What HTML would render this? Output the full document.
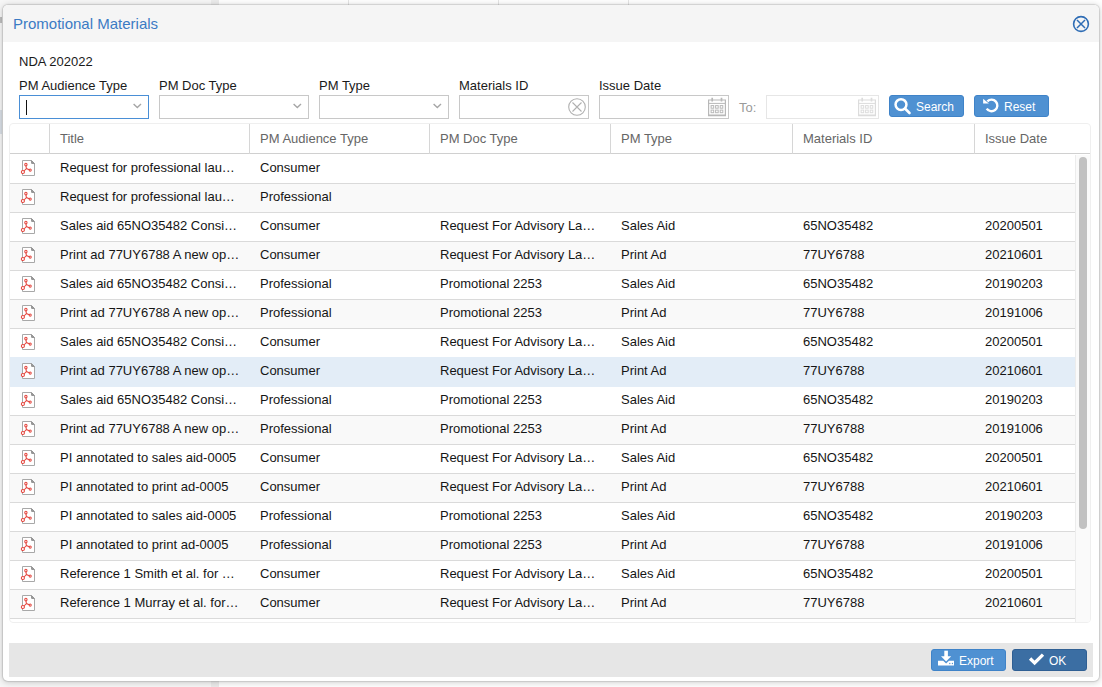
<!DOCTYPE html>
<html><head><meta charset="utf-8">
<style>
*{box-sizing:border-box;margin:0;padding:0}
html,body{width:1102px;height:687px;overflow:hidden;background:#fbfbfb;font-family:"Liberation Sans",sans-serif;font-size:13px;color:#222}
.abs{position:absolute}
#dlg{position:absolute;left:3px;top:5px;width:1096px;height:676px;background:#fff;border-radius:5px;box-shadow:0 0 1px 1px rgba(0,0,0,.12),0 1px 6px 1px rgba(0,0,0,.16);overflow:hidden}
#hdr{position:absolute;left:0;top:0;width:1096px;height:37px;background:#f5f5f5}
#ttl{position:absolute;left:10px;top:10px;font-size:15px;line-height:17px;color:#3b7bc4;white-space:nowrap}
.lbl{position:absolute;font-size:13px;line-height:15px;color:#1a1a1a;white-space:nowrap}
.inp{position:absolute;top:90px;height:24px;border:1px solid #c8c8c8;background:#fff}
.inp.focus{border-color:#4a8fd6}
.chev{position:absolute;right:6px;top:7px}
.btn{position:absolute;height:22px;border-radius:3px;background:#4f91d2;border:1px solid #3f83c8;color:#fff;font-size:12px;line-height:20px;white-space:nowrap}
#tbl{position:absolute;left:6px;top:118px;width:1082px;height:500px;border:1px solid #efefef;border-radius:4px;overflow:hidden;background:#fff}
.th{position:absolute;top:0;height:30px;border-bottom:1px solid #d0d0d0}
.thc{position:absolute;top:0;height:30px;border-left:1px solid #d6d6d6;color:#666;line-height:30px;padding-left:10px;white-space:nowrap}
.row{position:absolute;left:0;width:1065px;height:30px;border-bottom:1px solid #dadada;background:#fff}
.row.alt{background:#f9f9f9}
.row.hl{background:#e3edf7;border-bottom-color:#e3edf7}
.row .c{position:absolute;top:0;line-height:27px;white-space:nowrap;color:#151515}
.pdf{position:absolute;left:10px;top:6px}
#sb{position:absolute;left:1065px;top:31px;width:15px;height:470px;background:#fafafa;border-left:1px solid #ececec}
#thumb{position:absolute;left:3px;top:2px;width:8px;height:372px;border-radius:4px;background:#c1c1c1}
#ftr{position:absolute;left:6px;top:638px;width:1084px;height:34px;background:#e6e6e6}
</style></head><body>
<div class="abs" style="left:0;top:0;width:211px;height:687px;background:#f6f6f6"></div>
<div class="abs" style="left:211px;top:0;width:8px;height:687px;background:#ebebeb"></div>
<div class="abs" style="left:219px;top:0;width:883px;height:687px;background:#fefefe"></div>
<div class="abs" style="left:348px;top:0;width:1px;height:6px;background:#e4e4e4"></div>
<div class="abs" style="left:498px;top:0;width:1px;height:6px;background:#e4e4e4"></div>
<div class="abs" style="left:628px;top:0;width:1px;height:6px;background:#e4e4e4"></div>
<div class="abs" style="left:0;top:17px;width:2px;height:6px;background:#bdbdbd"></div>
<div class="abs" style="left:0;top:110px;width:2px;height:24px;background:#d8dee5"></div>
<div id="dlg">
  <div id="hdr">
    <div id="ttl">Promotional Materials</div>
    <svg class="abs" style="left:1069px;top:10px" width="18" height="18" viewBox="0 0 18 18"><circle cx="9" cy="9" r="7.4" fill="none" stroke="#2f6db5" stroke-width="1.6"/><path d="M5 5L13 13M13 5L5 13" stroke="#2f6db5" stroke-width="1.5"/></svg>
  </div>
  <div class="lbl" style="left:16px;top:49px">NDA 202022</div>
  <div class="lbl" style="left:16px;top:73px">PM Audience Type</div>
  <div class="lbl" style="left:156px;top:73px">PM Doc Type</div>
  <div class="lbl" style="left:316px;top:73px">PM Type</div>
  <div class="lbl" style="left:456px;top:73px">Materials ID</div>
  <div class="lbl" style="left:596px;top:73px">Issue Date</div>

  <div class="inp focus" style="left:16px;width:130px"><div class="abs" style="left:6px;top:4px;width:1px;height:15px;background:#111"></div>
    <svg class="chev" width="9" height="6" viewBox="0 0 9 6"><path d="M0.6 0.9L4.3 4.6L8 0.9" fill="none" stroke="#a6a6a6" stroke-width="1.35"/></svg></div>
  <div class="inp" style="left:156px;width:150px"><svg class="chev" width="9" height="6" viewBox="0 0 9 6"><path d="M0.6 0.9L4.3 4.6L8 0.9" fill="none" stroke="#a6a6a6" stroke-width="1.35"/></svg></div>
  <div class="inp" style="left:316px;width:130px"><svg class="chev" width="9" height="6" viewBox="0 0 9 6"><path d="M0.6 0.9L4.3 4.6L8 0.9" fill="none" stroke="#a6a6a6" stroke-width="1.35"/></svg></div>
  <div class="inp" style="left:456px;width:130px"><svg class="abs" style="left:108px;top:2px" width="18" height="18" viewBox="0 0 18 18"><circle cx="9" cy="9" r="8.3" fill="none" stroke="#b0b0b0" stroke-width="1.1"/><path d="M4.5 4.5L13.5 13.5M13.5 4.5L4.5 13.5" stroke="#b0b0b0" stroke-width="1.1"/></svg></div>
  <div class="inp" style="left:596px;width:130px"><svg class="abs" style="left:108px;top:1px" width="18" height="20" viewBox="0 0 18 20"><g fill="none" stroke="#b8b8b8"><path d="M0.6 3H17.4V18.6H0.6Z" stroke-width="1.2"/><path d="M0.6 6.4H17.4"/><path d="M0.6 18.2H17.4" stroke-width="1.6"/><path d="M4.2 0.8V4.4M13.5 0.8V4.4" stroke-width="1.7"/><rect x="3.1" y="8.6" width="2.6" height="2.6"/><rect x="7.6" y="8.6" width="2.6" height="2.6"/><rect x="12.2" y="8.6" width="2.6" height="2.6"/><rect x="3.1" y="13.1" width="2.6" height="2.6"/><rect x="7.6" y="13.1" width="2.6" height="2.6"/><rect x="12.2" y="13.1" width="2.6" height="2.6"/></g></svg></div>
  <div class="lbl" style="left:736px;top:95px;color:#9a9a9a">To:</div>
  <div class="inp" style="left:763px;width:113px;border-color:#e6e6e6"><svg class="abs" style="left:91px;top:1px" width="18" height="20" viewBox="0 0 18 20"><g fill="none" stroke="#dcdcdc"><path d="M0.6 3H17.4V18.6H0.6Z" stroke-width="1.2"/><path d="M0.6 6.4H17.4"/><path d="M0.6 18.2H17.4" stroke-width="1.6"/><path d="M4.2 0.8V4.4M13.5 0.8V4.4" stroke-width="1.7"/><rect x="3.1" y="8.6" width="2.6" height="2.6"/><rect x="7.6" y="8.6" width="2.6" height="2.6"/><rect x="12.2" y="8.6" width="2.6" height="2.6"/><rect x="3.1" y="13.1" width="2.6" height="2.6"/><rect x="7.6" y="13.1" width="2.6" height="2.6"/><rect x="12.2" y="13.1" width="2.6" height="2.6"/></g></svg></div>

  <div class="btn" style="left:886px;top:90px;width:75px">
    <svg class="abs" style="left:0;top:0" width="24" height="20" viewBox="0 0 24 20"><circle cx="11" cy="8.6" r="5.45" fill="none" stroke="#fff" stroke-width="2.5"/><path d="M15.2 12.8L19.5 17" stroke="#fff" stroke-width="2.6" stroke-linecap="round"/></svg>
    <span class="abs" style="left:26px;top:1px">Search</span></div>
  <div class="btn" style="left:971px;top:90px;width:75px">
    <svg class="abs" style="left:0;top:0" width="26" height="20" viewBox="0 0 26 20"><path d="M12.4 5.4A5.8 5.8 0 1 1 11.7 12.6" fill="none" stroke="#fff" stroke-width="2.4"/><path d="M8.1 2.8V7.6H13.9Z" fill="#fff"/></svg>
    <span class="abs" style="left:29px;top:1px">Reset</span></div>

  <div id="tbl">
    <div class="th" style="left:0;width:1082px"></div>
    <div class="thc" style="left:39px;width:200px">Title</div>
    <div class="thc" style="left:239px;width:180px">PM Audience Type</div>
    <div class="thc" style="left:419px;width:181px">PM Doc Type</div>
    <div class="thc" style="left:600px;width:182px">PM Type</div>
    <div class="thc" style="left:782px;width:182px">Materials ID</div>
    <div class="thc" style="left:964px;width:118px">Issue Date</div>
<div class="row" style="top:30px;z-index:100"><svg class="pdf" width="17" height="18" viewBox="0 0 17 18"><path d="M2.5 0.5H11.4L14.5 3.6V15.5H2.5Z" fill="#fff" stroke="#a8a8a8" stroke-width="1"/><path d="M11.4 0.6L14.4 3.6L11.6 3.4Z" fill="#9a9a9a" stroke="#8e8e8e" stroke-width="0.9"/><g fill="none" stroke="#e4453d" stroke-width="1.05"><ellipse cx="5.9" cy="4.6" rx="1.15" ry="1.35"/><path d="M6 6L6.4 8.6L9.3 9.8M6.4 8.6L4 11"/><circle cx="10.2" cy="10.1" r="1.05"/><circle cx="2.9" cy="12" r="1.55" fill="#fff"/></g></svg><span class="c" style="left:50px">Request for professional lau…</span><span class="c" style="left:250px">Consumer</span></div>
<div class="row alt" style="top:59px;z-index:99"><svg class="pdf" width="17" height="18" viewBox="0 0 17 18"><path d="M2.5 0.5H11.4L14.5 3.6V15.5H2.5Z" fill="#fff" stroke="#a8a8a8" stroke-width="1"/><path d="M11.4 0.6L14.4 3.6L11.6 3.4Z" fill="#9a9a9a" stroke="#8e8e8e" stroke-width="0.9"/><g fill="none" stroke="#e4453d" stroke-width="1.05"><ellipse cx="5.9" cy="4.6" rx="1.15" ry="1.35"/><path d="M6 6L6.4 8.6L9.3 9.8M6.4 8.6L4 11"/><circle cx="10.2" cy="10.1" r="1.05"/><circle cx="2.9" cy="12" r="1.55" fill="#fff"/></g></svg><span class="c" style="left:50px">Request for professional lau…</span><span class="c" style="left:250px">Professional</span></div>
<div class="row" style="top:88px;z-index:98"><svg class="pdf" width="17" height="18" viewBox="0 0 17 18"><path d="M2.5 0.5H11.4L14.5 3.6V15.5H2.5Z" fill="#fff" stroke="#a8a8a8" stroke-width="1"/><path d="M11.4 0.6L14.4 3.6L11.6 3.4Z" fill="#9a9a9a" stroke="#8e8e8e" stroke-width="0.9"/><g fill="none" stroke="#e4453d" stroke-width="1.05"><ellipse cx="5.9" cy="4.6" rx="1.15" ry="1.35"/><path d="M6 6L6.4 8.6L9.3 9.8M6.4 8.6L4 11"/><circle cx="10.2" cy="10.1" r="1.05"/><circle cx="2.9" cy="12" r="1.55" fill="#fff"/></g></svg><span class="c" style="left:50px">Sales aid 65NO35482 Consi…</span><span class="c" style="left:250px">Consumer</span><span class="c" style="left:430px">Request For Advisory La…</span><span class="c" style="left:611px">Sales Aid</span><span class="c" style="left:793px">65NO35482</span><span class="c" style="left:975px">20200501</span></div>
<div class="row alt" style="top:117px;z-index:97"><svg class="pdf" width="17" height="18" viewBox="0 0 17 18"><path d="M2.5 0.5H11.4L14.5 3.6V15.5H2.5Z" fill="#fff" stroke="#a8a8a8" stroke-width="1"/><path d="M11.4 0.6L14.4 3.6L11.6 3.4Z" fill="#9a9a9a" stroke="#8e8e8e" stroke-width="0.9"/><g fill="none" stroke="#e4453d" stroke-width="1.05"><ellipse cx="5.9" cy="4.6" rx="1.15" ry="1.35"/><path d="M6 6L6.4 8.6L9.3 9.8M6.4 8.6L4 11"/><circle cx="10.2" cy="10.1" r="1.05"/><circle cx="2.9" cy="12" r="1.55" fill="#fff"/></g></svg><span class="c" style="left:50px">Print ad 77UY6788 A new op…</span><span class="c" style="left:250px">Consumer</span><span class="c" style="left:430px">Request For Advisory La…</span><span class="c" style="left:611px">Print Ad</span><span class="c" style="left:793px">77UY6788</span><span class="c" style="left:975px">20210601</span></div>
<div class="row" style="top:146px;z-index:96"><svg class="pdf" width="17" height="18" viewBox="0 0 17 18"><path d="M2.5 0.5H11.4L14.5 3.6V15.5H2.5Z" fill="#fff" stroke="#a8a8a8" stroke-width="1"/><path d="M11.4 0.6L14.4 3.6L11.6 3.4Z" fill="#9a9a9a" stroke="#8e8e8e" stroke-width="0.9"/><g fill="none" stroke="#e4453d" stroke-width="1.05"><ellipse cx="5.9" cy="4.6" rx="1.15" ry="1.35"/><path d="M6 6L6.4 8.6L9.3 9.8M6.4 8.6L4 11"/><circle cx="10.2" cy="10.1" r="1.05"/><circle cx="2.9" cy="12" r="1.55" fill="#fff"/></g></svg><span class="c" style="left:50px">Sales aid 65NO35482 Consi…</span><span class="c" style="left:250px">Professional</span><span class="c" style="left:430px">Promotional 2253</span><span class="c" style="left:611px">Sales Aid</span><span class="c" style="left:793px">65NO35482</span><span class="c" style="left:975px">20190203</span></div>
<div class="row alt" style="top:175px;z-index:95"><svg class="pdf" width="17" height="18" viewBox="0 0 17 18"><path d="M2.5 0.5H11.4L14.5 3.6V15.5H2.5Z" fill="#fff" stroke="#a8a8a8" stroke-width="1"/><path d="M11.4 0.6L14.4 3.6L11.6 3.4Z" fill="#9a9a9a" stroke="#8e8e8e" stroke-width="0.9"/><g fill="none" stroke="#e4453d" stroke-width="1.05"><ellipse cx="5.9" cy="4.6" rx="1.15" ry="1.35"/><path d="M6 6L6.4 8.6L9.3 9.8M6.4 8.6L4 11"/><circle cx="10.2" cy="10.1" r="1.05"/><circle cx="2.9" cy="12" r="1.55" fill="#fff"/></g></svg><span class="c" style="left:50px">Print ad 77UY6788 A new op…</span><span class="c" style="left:250px">Professional</span><span class="c" style="left:430px">Promotional 2253</span><span class="c" style="left:611px">Print Ad</span><span class="c" style="left:793px">77UY6788</span><span class="c" style="left:975px">20191006</span></div>
<div class="row" style="top:204px;z-index:94"><svg class="pdf" width="17" height="18" viewBox="0 0 17 18"><path d="M2.5 0.5H11.4L14.5 3.6V15.5H2.5Z" fill="#fff" stroke="#a8a8a8" stroke-width="1"/><path d="M11.4 0.6L14.4 3.6L11.6 3.4Z" fill="#9a9a9a" stroke="#8e8e8e" stroke-width="0.9"/><g fill="none" stroke="#e4453d" stroke-width="1.05"><ellipse cx="5.9" cy="4.6" rx="1.15" ry="1.35"/><path d="M6 6L6.4 8.6L9.3 9.8M6.4 8.6L4 11"/><circle cx="10.2" cy="10.1" r="1.05"/><circle cx="2.9" cy="12" r="1.55" fill="#fff"/></g></svg><span class="c" style="left:50px">Sales aid 65NO35482 Consi…</span><span class="c" style="left:250px">Consumer</span><span class="c" style="left:430px">Request For Advisory La…</span><span class="c" style="left:611px">Sales Aid</span><span class="c" style="left:793px">65NO35482</span><span class="c" style="left:975px">20200501</span></div>
<div class="row alt hl" style="top:233px;z-index:200"><svg class="pdf" width="17" height="18" viewBox="0 0 17 18"><path d="M2.5 0.5H11.4L14.5 3.6V15.5H2.5Z" fill="#fff" stroke="#a8a8a8" stroke-width="1"/><path d="M11.4 0.6L14.4 3.6L11.6 3.4Z" fill="#9a9a9a" stroke="#8e8e8e" stroke-width="0.9"/><g fill="none" stroke="#e4453d" stroke-width="1.05"><ellipse cx="5.9" cy="4.6" rx="1.15" ry="1.35"/><path d="M6 6L6.4 8.6L9.3 9.8M6.4 8.6L4 11"/><circle cx="10.2" cy="10.1" r="1.05"/><circle cx="2.9" cy="12" r="1.55" fill="#fff"/></g></svg><span class="c" style="left:50px">Print ad 77UY6788 A new op…</span><span class="c" style="left:250px">Consumer</span><span class="c" style="left:430px">Request For Advisory La…</span><span class="c" style="left:611px">Print Ad</span><span class="c" style="left:793px">77UY6788</span><span class="c" style="left:975px">20210601</span></div>
<div class="row" style="top:262px;z-index:92"><svg class="pdf" width="17" height="18" viewBox="0 0 17 18"><path d="M2.5 0.5H11.4L14.5 3.6V15.5H2.5Z" fill="#fff" stroke="#a8a8a8" stroke-width="1"/><path d="M11.4 0.6L14.4 3.6L11.6 3.4Z" fill="#9a9a9a" stroke="#8e8e8e" stroke-width="0.9"/><g fill="none" stroke="#e4453d" stroke-width="1.05"><ellipse cx="5.9" cy="4.6" rx="1.15" ry="1.35"/><path d="M6 6L6.4 8.6L9.3 9.8M6.4 8.6L4 11"/><circle cx="10.2" cy="10.1" r="1.05"/><circle cx="2.9" cy="12" r="1.55" fill="#fff"/></g></svg><span class="c" style="left:50px">Sales aid 65NO35482 Consi…</span><span class="c" style="left:250px">Professional</span><span class="c" style="left:430px">Promotional 2253</span><span class="c" style="left:611px">Sales Aid</span><span class="c" style="left:793px">65NO35482</span><span class="c" style="left:975px">20190203</span></div>
<div class="row alt" style="top:291px;z-index:91"><svg class="pdf" width="17" height="18" viewBox="0 0 17 18"><path d="M2.5 0.5H11.4L14.5 3.6V15.5H2.5Z" fill="#fff" stroke="#a8a8a8" stroke-width="1"/><path d="M11.4 0.6L14.4 3.6L11.6 3.4Z" fill="#9a9a9a" stroke="#8e8e8e" stroke-width="0.9"/><g fill="none" stroke="#e4453d" stroke-width="1.05"><ellipse cx="5.9" cy="4.6" rx="1.15" ry="1.35"/><path d="M6 6L6.4 8.6L9.3 9.8M6.4 8.6L4 11"/><circle cx="10.2" cy="10.1" r="1.05"/><circle cx="2.9" cy="12" r="1.55" fill="#fff"/></g></svg><span class="c" style="left:50px">Print ad 77UY6788 A new op…</span><span class="c" style="left:250px">Professional</span><span class="c" style="left:430px">Promotional 2253</span><span class="c" style="left:611px">Print Ad</span><span class="c" style="left:793px">77UY6788</span><span class="c" style="left:975px">20191006</span></div>
<div class="row" style="top:320px;z-index:90"><svg class="pdf" width="17" height="18" viewBox="0 0 17 18"><path d="M2.5 0.5H11.4L14.5 3.6V15.5H2.5Z" fill="#fff" stroke="#a8a8a8" stroke-width="1"/><path d="M11.4 0.6L14.4 3.6L11.6 3.4Z" fill="#9a9a9a" stroke="#8e8e8e" stroke-width="0.9"/><g fill="none" stroke="#e4453d" stroke-width="1.05"><ellipse cx="5.9" cy="4.6" rx="1.15" ry="1.35"/><path d="M6 6L6.4 8.6L9.3 9.8M6.4 8.6L4 11"/><circle cx="10.2" cy="10.1" r="1.05"/><circle cx="2.9" cy="12" r="1.55" fill="#fff"/></g></svg><span class="c" style="left:50px">PI annotated to sales aid-0005</span><span class="c" style="left:250px">Consumer</span><span class="c" style="left:430px">Request For Advisory La…</span><span class="c" style="left:611px">Sales Aid</span><span class="c" style="left:793px">65NO35482</span><span class="c" style="left:975px">20200501</span></div>
<div class="row alt" style="top:349px;z-index:89"><svg class="pdf" width="17" height="18" viewBox="0 0 17 18"><path d="M2.5 0.5H11.4L14.5 3.6V15.5H2.5Z" fill="#fff" stroke="#a8a8a8" stroke-width="1"/><path d="M11.4 0.6L14.4 3.6L11.6 3.4Z" fill="#9a9a9a" stroke="#8e8e8e" stroke-width="0.9"/><g fill="none" stroke="#e4453d" stroke-width="1.05"><ellipse cx="5.9" cy="4.6" rx="1.15" ry="1.35"/><path d="M6 6L6.4 8.6L9.3 9.8M6.4 8.6L4 11"/><circle cx="10.2" cy="10.1" r="1.05"/><circle cx="2.9" cy="12" r="1.55" fill="#fff"/></g></svg><span class="c" style="left:50px">PI annotated to print ad-0005</span><span class="c" style="left:250px">Consumer</span><span class="c" style="left:430px">Request For Advisory La…</span><span class="c" style="left:611px">Print Ad</span><span class="c" style="left:793px">77UY6788</span><span class="c" style="left:975px">20210601</span></div>
<div class="row" style="top:378px;z-index:88"><svg class="pdf" width="17" height="18" viewBox="0 0 17 18"><path d="M2.5 0.5H11.4L14.5 3.6V15.5H2.5Z" fill="#fff" stroke="#a8a8a8" stroke-width="1"/><path d="M11.4 0.6L14.4 3.6L11.6 3.4Z" fill="#9a9a9a" stroke="#8e8e8e" stroke-width="0.9"/><g fill="none" stroke="#e4453d" stroke-width="1.05"><ellipse cx="5.9" cy="4.6" rx="1.15" ry="1.35"/><path d="M6 6L6.4 8.6L9.3 9.8M6.4 8.6L4 11"/><circle cx="10.2" cy="10.1" r="1.05"/><circle cx="2.9" cy="12" r="1.55" fill="#fff"/></g></svg><span class="c" style="left:50px">PI annotated to sales aid-0005</span><span class="c" style="left:250px">Professional</span><span class="c" style="left:430px">Promotional 2253</span><span class="c" style="left:611px">Sales Aid</span><span class="c" style="left:793px">65NO35482</span><span class="c" style="left:975px">20190203</span></div>
<div class="row alt" style="top:407px;z-index:87"><svg class="pdf" width="17" height="18" viewBox="0 0 17 18"><path d="M2.5 0.5H11.4L14.5 3.6V15.5H2.5Z" fill="#fff" stroke="#a8a8a8" stroke-width="1"/><path d="M11.4 0.6L14.4 3.6L11.6 3.4Z" fill="#9a9a9a" stroke="#8e8e8e" stroke-width="0.9"/><g fill="none" stroke="#e4453d" stroke-width="1.05"><ellipse cx="5.9" cy="4.6" rx="1.15" ry="1.35"/><path d="M6 6L6.4 8.6L9.3 9.8M6.4 8.6L4 11"/><circle cx="10.2" cy="10.1" r="1.05"/><circle cx="2.9" cy="12" r="1.55" fill="#fff"/></g></svg><span class="c" style="left:50px">PI annotated to print ad-0005</span><span class="c" style="left:250px">Professional</span><span class="c" style="left:430px">Promotional 2253</span><span class="c" style="left:611px">Print Ad</span><span class="c" style="left:793px">77UY6788</span><span class="c" style="left:975px">20191006</span></div>
<div class="row" style="top:436px;z-index:86"><svg class="pdf" width="17" height="18" viewBox="0 0 17 18"><path d="M2.5 0.5H11.4L14.5 3.6V15.5H2.5Z" fill="#fff" stroke="#a8a8a8" stroke-width="1"/><path d="M11.4 0.6L14.4 3.6L11.6 3.4Z" fill="#9a9a9a" stroke="#8e8e8e" stroke-width="0.9"/><g fill="none" stroke="#e4453d" stroke-width="1.05"><ellipse cx="5.9" cy="4.6" rx="1.15" ry="1.35"/><path d="M6 6L6.4 8.6L9.3 9.8M6.4 8.6L4 11"/><circle cx="10.2" cy="10.1" r="1.05"/><circle cx="2.9" cy="12" r="1.55" fill="#fff"/></g></svg><span class="c" style="left:50px">Reference 1 Smith et al. for …</span><span class="c" style="left:250px">Consumer</span><span class="c" style="left:430px">Request For Advisory La…</span><span class="c" style="left:611px">Sales Aid</span><span class="c" style="left:793px">65NO35482</span><span class="c" style="left:975px">20200501</span></div>
<div class="row alt" style="top:465px;z-index:85"><svg class="pdf" width="17" height="18" viewBox="0 0 17 18"><path d="M2.5 0.5H11.4L14.5 3.6V15.5H2.5Z" fill="#fff" stroke="#a8a8a8" stroke-width="1"/><path d="M11.4 0.6L14.4 3.6L11.6 3.4Z" fill="#9a9a9a" stroke="#8e8e8e" stroke-width="0.9"/><g fill="none" stroke="#e4453d" stroke-width="1.05"><ellipse cx="5.9" cy="4.6" rx="1.15" ry="1.35"/><path d="M6 6L6.4 8.6L9.3 9.8M6.4 8.6L4 11"/><circle cx="10.2" cy="10.1" r="1.05"/><circle cx="2.9" cy="12" r="1.55" fill="#fff"/></g></svg><span class="c" style="left:50px">Reference 1 Murray et al. for…</span><span class="c" style="left:250px">Consumer</span><span class="c" style="left:430px">Request For Advisory La…</span><span class="c" style="left:611px">Print Ad</span><span class="c" style="left:793px">77UY6788</span><span class="c" style="left:975px">20210601</span></div>
    <div id="sb"><div id="thumb"></div></div>
  </div>

  <div id="ftr">
    <div class="btn" style="left:922px;top:6px;width:75px">
      <svg class="abs" style="left:0;top:0" width="26" height="20" viewBox="0 0 26 20"><path d="M14.1 0.7V7" stroke="#fff" stroke-width="3.6"/><path d="M9 6.2H19.2L14.1 11.6Z" fill="#fff"/><path d="M6 10.7H11.2L14.1 13.4L17 10.7H22V15.5H6Z" fill="#fff"/><circle cx="17.8" cy="13.5" r="0.65" fill="#4f91d2"/><circle cx="20.4" cy="13.5" r="0.65" fill="#4f91d2"/></svg>
      <span class="abs" style="left:27px;top:1px">Export</span></div>
    <div class="btn" style="left:1003px;top:6px;width:75px;background:#3b6ea3;border-color:#2f5f93">
      <svg class="abs" style="left:0;top:0" width="34" height="20" viewBox="0 0 34 20"><path d="M17.1 8.5L21.6 12.9L30 4.6" fill="none" stroke="#fff" stroke-width="3.3"/></svg>
      <span class="abs" style="left:36px;top:1px">OK</span></div>
  </div>
</div>
</body></html>
